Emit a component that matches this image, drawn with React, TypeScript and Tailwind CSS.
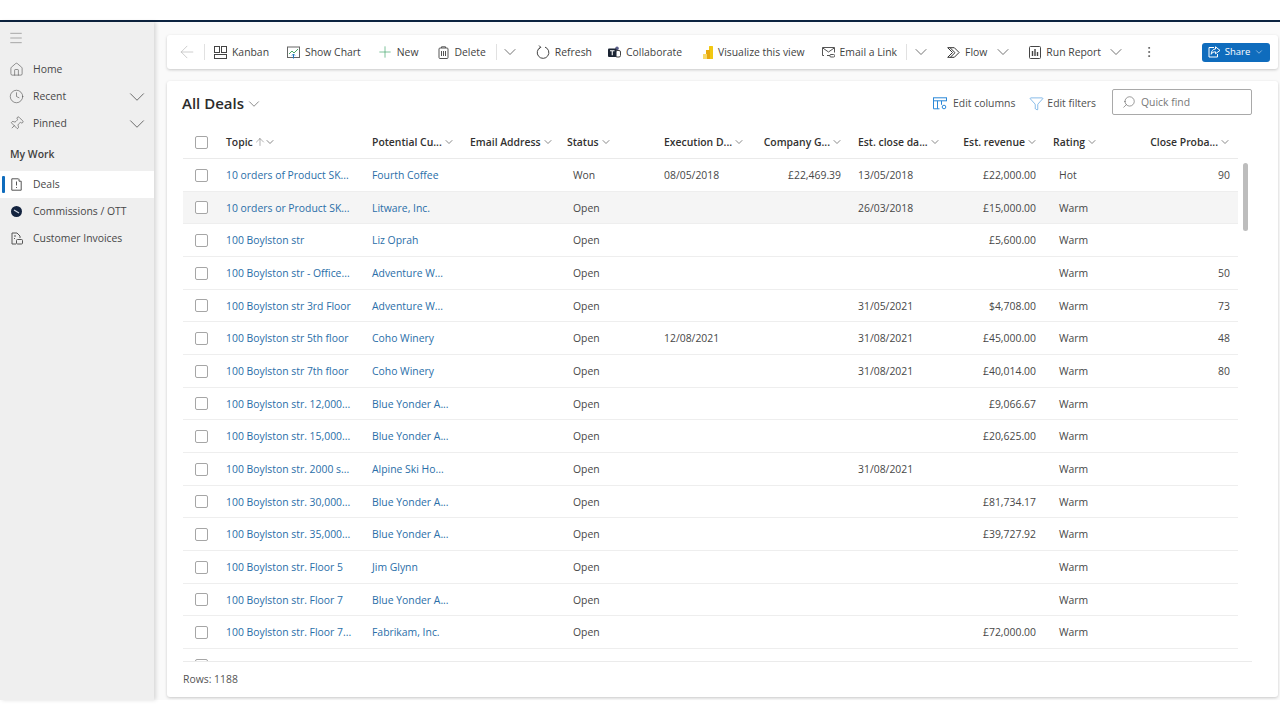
import React from "react";
import { ArrowLeft, ChevronDown, Clock, Filter, Home, Pin, Plus, Search, MoreVertical, ArrowUp, Menu } from "lucide-react";

const rows: string[][] = [
  ["10 orders of Product SK...", "Fourth Coffee", "Won", "08/05/2018", "£22,469.39", "13/05/2018", "£22,000.00", "Hot", "90"],
  ["10 orders or Product SK...", "Litware, Inc.", "Open", "", "", "26/03/2018", "£15,000.00", "Warm", ""],
  ["100 Boylston str", "Liz Oprah", "Open", "", "", "", "£5,600.00", "Warm", ""],
  ["100 Boylston str - Office...", "Adventure W...", "Open", "", "", "", "", "Warm", "50"],
  ["100 Boylston str 3rd Floor", "Adventure W...", "Open", "", "", "31/05/2021", "$4,708.00", "Warm", "73"],
  ["100 Boylston str 5th floor", "Coho Winery", "Open", "12/08/2021", "", "31/08/2021", "£45,000.00", "Warm", "48"],
  ["100 Boylston str 7th floor", "Coho Winery", "Open", "", "", "31/08/2021", "£40,014.00", "Warm", "80"],
  ["100 Boylston str. 12,000...", "Blue Yonder A...", "Open", "", "", "", "£9,066.67", "Warm", ""],
  ["100 Boylston str. 15,000...", "Blue Yonder A...", "Open", "", "", "", "£20,625.00", "Warm", ""],
  ["100 Boylston str. 2000 s...", "Alpine Ski Ho...", "Open", "", "", "31/08/2021", "", "Warm", ""],
  ["100 Boylston str. 30,000...", "Blue Yonder A...", "Open", "", "", "", "£81,734.17", "Warm", ""],
  ["100 Boylston str. 35,000...", "Blue Yonder A...", "Open", "", "", "", "£39,727.92", "Warm", ""],
  ["100 Boylston str. Floor 5", "Jim Glynn", "Open", "", "", "", "", "Warm", ""],
  ["100 Boylston str. Floor 7", "Blue Yonder A...", "Open", "", "", "", "", "Warm", ""],
  ["100 Boylston str. Floor 7...", "Fabrikam, Inc.", "Open", "", "", "", "£72,000.00", "Warm", ""],
];

const gridCols = "grid grid-cols-[35px_146px_98px_97px_97px_97px_97px_97px_98px_97px_96px]";

function Chev({ className = "" }: { className?: string }) {
  return <ChevronDown size={12} strokeWidth={1.5} className={"text-[#616161] shrink-0 " + className} />;
}

function Tool({ icon, label, className = "" }: { icon: React.ReactNode; label: string; className?: string }) {
  return (
    <div className={"flex items-center gap-[5px] shrink-0 whitespace-nowrap " + className}>
      {icon}
      <span>{label}</span>
    </div>
  );
}

function Caret({ className = "" }: { className?: string }) {
  return <ChevronDown size={20} strokeWidth={0.9} className={"text-[#444] shrink-0 " + className} />;
}

function Head({ label, right }: { label: string; right?: boolean }) {
  return (
    <div className={"flex items-center gap-[1px] font-semibold whitespace-nowrap text-[#323130] " + (right ? "justify-end pr-[7px]" : "ml-2")}>
      <span>{label}</span>
      <Chev />
    </div>
  );
}

function Box() {
  return <div className="w-[13px] h-[13px] rounded-[2px] border border-[#a6a6a6] bg-white" />;
}

export default function App() {
  return (
    <div className="w-[1280px] h-[720px] bg-white overflow-hidden flex flex-col text-[10.4px] leading-none text-[#474747] font-['Open_Sans','Noto_Sans',sans-serif]">
      <div className="h-[20px] shrink-0 bg-white" />
      <div className="h-[2px] shrink-0 bg-[#0c2340]" />
      <div className="h-[678px] shrink-0 flex bg-[#fafafa]">
        {/* sidebar */}
        <aside className="w-[154px] shrink-0 bg-[#efefef] shadow-[2px_0_4px_rgba(0,0,0,0.14)] flex flex-col pt-[8px]">
          <Menu size={16} strokeWidth={0.9} className="ml-[8px] text-[#777]" />
          <div className="mt-[10px] h-[27px] flex items-center pl-[9px] gap-[9px]">
            <Home size={15} strokeWidth={1} className="text-[#555]" /><span>Home</span>
          </div>
          <div className="h-[27px] flex items-center pl-[9px] gap-[9px]">
            <Clock size={15} strokeWidth={1} className="text-[#555]" /><span>Recent</span>
            <ChevronDown size={26} strokeWidth={0.7} className="ml-auto mr-[4px] text-[#444]" />
          </div>
          <div className="h-[27px] flex items-center pl-[9px] gap-[9px]">
            <Pin size={15} strokeWidth={1} className="text-[#555] rotate-45" /><span>Pinned</span>
            <ChevronDown size={26} strokeWidth={0.7} className="ml-auto mr-[4px] text-[#444]" />
          </div>
          <div className="h-[34px] flex items-center pl-[10px] font-semibold text-[#404040]">My Work</div>
          <div className="h-[27px] bg-white flex items-center relative pl-[11px] gap-[11px]">
            <div className="absolute left-[2px] top-[5px] w-[3px] h-[17px] rounded-[1px] bg-[#0f6cbd]" />
            <svg width="11" height="13" viewBox="0 0 11 13" fill="none" stroke="#555" strokeWidth="1"><path d="M7.5 .8H.8v11.4h9.4V3.2" /><path d="M8 .8v2.4h2.2" /><path d="M5.5 3.5v4M5.5 9v1" /></svg>
            <span>Deals</span>
          </div>
          <div className="h-[27px] flex items-center pl-[11px] gap-[11px]">
            <svg width="11" height="11" viewBox="0 0 11 11"><circle cx="5.5" cy="5.5" r="5.5" fill="#13233f" /><path d="M3 4l5 3" stroke="#cfd6e0" strokeWidth="1.2" /></svg>
            <span>Commissions / OTT</span>
          </div>
          <div className="h-[27px] flex items-center pl-[11px] gap-[10px]">
            <svg width="12" height="13" viewBox="0 0 12 13" fill="none" stroke="#555" strokeWidth="1"><path d="M1 1h5l3 3v2M1 1v11h4" /><rect x="5.5" y="7.5" width="6" height="4.5" rx="1" /><path d="M3 4h2M3 6.5h1" /></svg>
            <span>Customer Invoices</span>
          </div>
        </aside>

        {/* main */}
        <main className="flex-1 min-w-0 flex flex-col pl-[13px] pr-[2px] pt-[13px]">
          <div className="h-[34px] shrink-0 bg-white rounded-[3px] shadow-[0_1px_3px_rgba(0,0,0,0.2)] flex items-center text-[#3f3f3f] pl-[10px] pr-[8px]">
            <ArrowLeft size={20} strokeWidth={0.8} className="text-[#b5b5b5] shrink-0" />
            <div className="w-px h-[16px] bg-[#e1e1e1] ml-[7px] mr-[9px] shrink-0" />
            <Tool label="Kanban" className="mr-[18px]" icon={
              <svg width="13" height="13" viewBox="0 0 13 13" fill="none" stroke="#444" strokeWidth="1"><rect x=".5" y=".5" width="5" height="6" /><rect x="7.5" y=".5" width="5" height="6" /><rect x=".5" y="8.5" width="12" height="4" /></svg>} />
            <Tool label="Show Chart" className="mr-[17px]" icon={
              <svg width="13" height="13" viewBox="0 0 13 13" fill="none"><rect x=".5" y="1" width="12" height="10.5" stroke="#666" /><path d="M2 8l3-3 2 2 4-4" stroke="#4aa564" /><path d="M6.5 12.5V8M5 9.5l1.5-1.5L8 9.5" stroke="#1f77c0" /></svg>} />
            <Tool label="New" className="mr-[20px]" icon={<Plus size={18} strokeWidth={0.9} className="text-[#3fa46a] -mx-[2px]" />} />
            <Tool label="Delete" icon={
              <svg width="11" height="13" viewBox="0 0 11 13" fill="none" stroke="#555" strokeWidth="1"><rect x="1" y="2" width="9" height="10.5" rx="1" /><path d="M3.5 2V.8h4V2M3.5 5v5M5.5 5v5M7.5 5v5" /></svg>} />
            <div className="w-px h-[16px] bg-[#e1e1e1] ml-[10px] mr-[3px] shrink-0" />
            <Caret className="mr-[16px]" />
            <Tool label="Refresh" className="mr-[16px]" icon={
              <svg width="14" height="14" viewBox="0 0 14 14" fill="none" stroke="#444" strokeWidth="1"><path d="M4.6 2.3A5.8 5.8 0 1 0 9 2.1M3 .5L4.8 2.3 2.8 3.9" /></svg>} />
            <Tool label="Collaborate" className="mr-[21px]" icon={
              <svg width="13" height="13" viewBox="0 0 13 13"><circle cx="9" cy="2.4" r="1.8" fill="#5b5f8a" /><rect x="7.5" y="4.5" width="5" height="6.5" rx="1.5" fill="none" stroke="#444" /><rect x="0" y="2.5" width="8.5" height="8.5" rx="1" fill="#1b2433" /><path d="M2 4.7h4.5M4.25 4.7v4.6" stroke="#fff" strokeWidth="1.1" /></svg>} />
            <Tool label="Visualize this view" className="mr-[17px]" icon={
              <svg width="10" height="13" viewBox="0 0 10 13"><rect x="6" y="0" width="4" height="13" rx=".5" fill="#f2c811" /><rect x="3" y="4" width="4" height="9" fill="#e8a90b" /><rect x="0" y="8" width="4" height="5" fill="#f7d969" /></svg>} />
            <Tool label="Email a Link" icon={
              <svg width="13" height="11" viewBox="0 0 13 11" fill="none" stroke="#555" strokeWidth="1"><path d="M2 8.5H.5v-8h12v5M.8 1l5.7 4 5.7-4" /><path d="M5 8.5h3M9 7.5h2.5a1.2 1.2 0 0 1 0 2.5H9a1.2 1.2 0 0 1 0-2.5z" /></svg>} />
            <div className="w-px h-[16px] bg-[#e1e1e1] ml-[9px] mr-[4px] shrink-0" />
            <Caret className="mr-[16px]" />
            <Tool label="Flow" icon={
              <svg width="13" height="11" viewBox="0 0 13 11" fill="none" stroke="#333" strokeWidth="1"><path d="M.7.7h6.6l4.8 4.8-4.8 4.8H.7L5.5 5.5z" /><path d="M3 .7l5 5-4.7 4.6" /></svg>} />
            <Caret className="ml-[6px] mr-[16px]" />
            <Tool label="Run Report" icon={
              <svg width="12" height="13" viewBox="0 0 12 13" fill="none" stroke="#444" strokeWidth="1"><rect x=".5" y=".5" width="11" height="12" rx="1" /><path d="M3.5 5v5M6 3v7M8.5 6v4" strokeWidth="1.4" /></svg>} />
            <Caret className="ml-[5px] mr-[16px]" />
            <MoreVertical size={14} strokeWidth={1.2} className="text-[#444] shrink-0" />
            <div className="ml-auto w-[68px] h-[19px] rounded-[3px] bg-[#0f6cbd] text-white flex items-center justify-center gap-[4px] text-[9.5px] shrink-0">
              <svg width="13" height="12" viewBox="0 0 13 12" fill="none" stroke="#fff" strokeWidth="1"><path d="M6 1.5H1v9.5h8.5V8" /><path d="M7.5 .8l4.5 3.6-4.5 3.4V5.8C5.5 5.8 4 6.5 3.2 8.3 3.2 5 5 3 7.5 3z" /></svg>
              <span>Share</span>
              <ChevronDown size={10} strokeWidth={1.2} className="text-white" />
            </div>
          </div>

          <div className="mt-[12px] h-[616px] shrink-0 bg-white rounded-[3px] shadow-[0_1px_3px_rgba(0,0,0,0.2)] flex flex-col pl-[16px] pr-[26px]">
            <div className="h-[44px] shrink-0 flex items-center">
              <span className="text-[15px] font-semibold text-[#2b2b2b] -ml-[1px] mt-[1px]">All Deals</span>
              <ChevronDown size={18} strokeWidth={0.9} className="ml-[1px] mt-[2px] text-[#555]" />
              <div className="ml-auto flex items-center text-[#4f4f4f]">
                <div className="flex items-center gap-[6px] mr-[14px]">
                  <svg width="14" height="13" viewBox="0 0 14 13" fill="none" stroke="#2b88d8" strokeWidth="1"><rect x=".5" y=".8" width="13" height="3" /><path d="M.5 3.8v8h6M4.5 3.8v8M8.5 3.8v4" /><circle cx="11" cy="10" r="1.8" /></svg>
                  <span>Edit columns</span>
                </div>
                <div className="flex items-center gap-[3px] mr-[16px]">
                  <Filter size={15} strokeWidth={0.9} className="text-[#2b88d8]" />
                  <span>Edit filters</span>
                </div>
                <div className="w-[140px] h-[26px] rounded-[2px] border border-[#a9a9a9] flex items-center pl-[9px] gap-[5px] text-[#777] mt-[-2px]">
                  <Search size={14} strokeWidth={1} className="text-[#555] -scale-x-100" />
                  <span>Quick find</span>
                </div>
              </div>
            </div>

            <div className={gridCols + " h-[34px] pt-px shrink-0 items-center border-b border-[#eaeaea] w-[1055px]"}>
              <div className="pl-[12px]"><Box /></div>
              <div className="ml-2 flex items-center font-semibold text-[#323130]">
                <span>Topic</span>
                <ArrowUp size={12} strokeWidth={0.9} className="text-[#555] shrink-0 ml-[1px]" />
                <Chev className="-ml-[2px]" />
              </div>
              <Head label="Potential Cu..." />
              <Head label="Email Address" />
              <Head label="Status" />
              <Head label="Execution D..." />
              <Head label="Company G..." right />
              <Head label="Est. close da..." />
              <Head label="Est. revenue" right />
              <Head label="Rating" />
              <Head label="Close Proba..." right />
            </div>

            <div className="h-[502px] shrink-0 relative">
              <div className="h-full overflow-hidden">
                {rows.map((r, i) => (
                  <div key={i} className={gridCols + " h-[32.67px] pt-px items-center border-b border-[#eeeeee] w-[1055px] " + (i === 1 ? "bg-[#f5f5f5]" : "")}>
                    <div className="pl-[12px]"><Box /></div>
                    <div className="pl-2 text-[#2a6ea8] whitespace-nowrap">{r[0]}</div>
                    <div className="pl-2 text-[#2a6ea8] whitespace-nowrap">{r[1]}</div>
                    <div />
                    <div className="pl-[14px]">{r[2]}</div>
                    <div className="pl-2">{r[3]}</div>
                    <div className="pr-[9px] text-right">{r[4]}</div>
                    <div className="pl-2">{r[5]}</div>
                    <div className="pr-[9px] text-right">{r[6]}</div>
                    <div className="pl-[14px]">{r[7]}</div>
                    <div className="pr-[8px] text-right">{r[8]}</div>
                  </div>
                ))}
                <div className="h-[32.67px] w-[1055px] flex items-center pl-[12px]"><Box /></div>
              </div>
              <div className="absolute right-[4px] top-[4px] w-[5px] h-[68px] rounded-full bg-[#bdbdbd]" />
            </div>

            <div className="flex-1 border-t border-[#ebebeb] flex items-center pb-[1px] text-[#555]">Rows: 1188</div>
          </div>
        </main>
      </div>
    </div>
  );
}
